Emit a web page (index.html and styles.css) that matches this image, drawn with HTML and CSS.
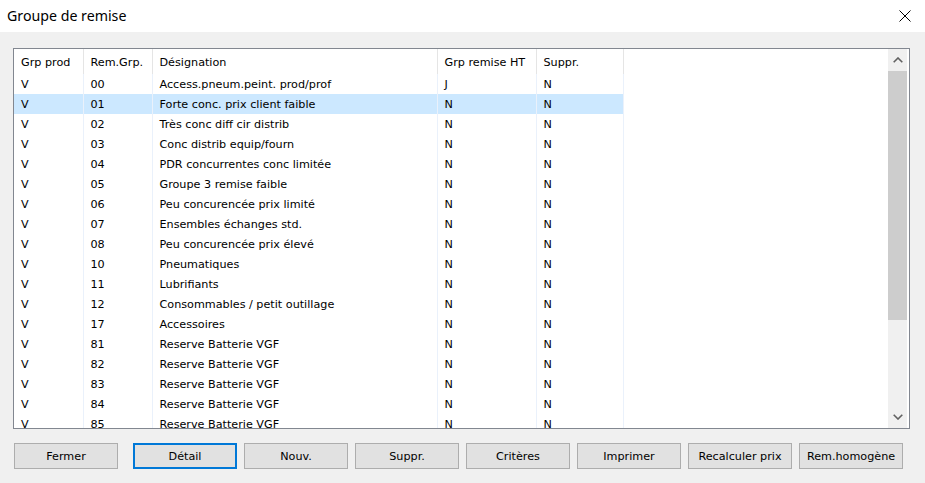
FILE: index.html
```html
<!DOCTYPE html>
<html lang="fr">
<head>
<meta charset="utf-8">
<title>Groupe de remise</title>
<link rel="stylesheet" href="styles.css">
</head>
<body>
<div class="window">
  <div class="titlebar">
    <span class="title">Groupe de remise</span>
    <svg class="close" width="12" height="12" viewBox="0 0 12 12"><path d="M0.5 0.5 L11.5 11.5 M11.5 0.5 L0.5 11.5" stroke="#000" stroke-width="1" fill="none"/></svg>
  </div>
  <div class="client">
    <div class="listbox">
      <div class="grid-area">
        <table class="grid">
          <colgroup>
            <col class="c1"><col class="c2"><col class="c3"><col class="c4"><col class="c5"><col>
          </colgroup>
          <thead>
            <tr><th>Grp prod</th><th>Rem.Grp.</th><th>Désignation</th><th>Grp remise HT</th><th>Suppr.</th><th class="fill"></th></tr>
          </thead>
          <tbody>
            <tr><td>V</td><td>00</td><td>Access.pneum.peint. prod/prof</td><td>J</td><td>N</td><td class="fill"></td></tr>
            <tr class="selected"><td>V</td><td>01</td><td>Forte conc. prix client faible</td><td>N</td><td>N</td><td class="fill"></td></tr>
            <tr><td>V</td><td>02</td><td>Très conc diff cir distrib</td><td>N</td><td>N</td><td class="fill"></td></tr>
            <tr><td>V</td><td>03</td><td>Conc distrib equip/fourn</td><td>N</td><td>N</td><td class="fill"></td></tr>
            <tr><td>V</td><td>04</td><td>PDR concurrentes conc limitée</td><td>N</td><td>N</td><td class="fill"></td></tr>
            <tr><td>V</td><td>05</td><td>Groupe 3 remise faible</td><td>N</td><td>N</td><td class="fill"></td></tr>
            <tr><td>V</td><td>06</td><td>Peu concurencée prix limité</td><td>N</td><td>N</td><td class="fill"></td></tr>
            <tr><td>V</td><td>07</td><td>Ensembles échanges std.</td><td>N</td><td>N</td><td class="fill"></td></tr>
            <tr><td>V</td><td>08</td><td>Peu concurencée prix élevé</td><td>N</td><td>N</td><td class="fill"></td></tr>
            <tr><td>V</td><td>10</td><td>Pneumatiques</td><td>N</td><td>N</td><td class="fill"></td></tr>
            <tr><td>V</td><td>11</td><td>Lubrifiants</td><td>N</td><td>N</td><td class="fill"></td></tr>
            <tr><td>V</td><td>12</td><td>Consommables / petit outillage</td><td>N</td><td>N</td><td class="fill"></td></tr>
            <tr><td>V</td><td>17</td><td>Accessoires</td><td>N</td><td>N</td><td class="fill"></td></tr>
            <tr><td>V</td><td>81</td><td>Reserve Batterie VGF</td><td>N</td><td>N</td><td class="fill"></td></tr>
            <tr><td>V</td><td>82</td><td>Reserve Batterie VGF</td><td>N</td><td>N</td><td class="fill"></td></tr>
            <tr><td>V</td><td>83</td><td>Reserve Batterie VGF</td><td>N</td><td>N</td><td class="fill"></td></tr>
            <tr><td>V</td><td>84</td><td>Reserve Batterie VGF</td><td>N</td><td>N</td><td class="fill"></td></tr>
            <tr><td>V</td><td>85</td><td>Reserve Batterie VGF</td><td>N</td><td>N</td><td class="fill"></td></tr>
          </tbody>
        </table>
      </div>
      <div class="vscroll">
        <div class="sb-btn">
          <svg width="10" height="6" viewBox="0 0 10 6"><path d="M0.7 5.3 L5 1 L9.3 5.3" stroke="#606060" stroke-width="1.6" fill="none"/></svg>
        </div>
        <div class="sb-track"><div class="sb-thumb"></div></div>
        <div class="sb-btn">
          <svg width="10" height="6" viewBox="0 0 10 6"><path d="M0.7 0.7 L5 5 L9.3 0.7" stroke="#606060" stroke-width="1.6" fill="none"/></svg>
        </div>
      </div>
    </div>
    <div class="buttons">
      <button class="btn">Fermer</button>
      <button class="btn default">Détail</button>
      <button class="btn">Nouv.</button>
      <button class="btn">Suppr.</button>
      <button class="btn">Critères</button>
      <button class="btn">Imprimer</button>
      <button class="btn">Recalculer prix</button>
      <button class="btn">Rem.homogène</button>
    </div>
  </div>
</div>
</body>
</html>
```

FILE: styles.css
```css
* { box-sizing: border-box; }

html, body {
  margin: 0;
  padding: 0;
  background: #f0f0f0;
}

.window {
  width: 925px;
  height: 483px;
  overflow: hidden;
  background: #f0f0f0;
  font-family: "DejaVu Sans", sans-serif;
  font-size: 11.2px;
  color: #000;
}

.titlebar {
  height: 32px;
  background: #fff;
  display: flex;
  align-items: center;
  justify-content: space-between;
  padding: 0 14px 2px 7px;
}

.title {
  font-family: "Noto Sans", "Open Sans", sans-serif;
  font-size: 14.2px;
  color: #000;
}

.close {
  display: block;
  margin-top: 1px;
}

.client {
  padding: 16px 0 0 13px;
}

.listbox {
  width: 897px;
  height: 381px;
  border: 1px solid #828790;
  background: #fff;
  display: flex;
  padding-right: 2px;
}

.grid-area {
  width: 874px;
  height: 379px;
  overflow: hidden;
}

.grid {
  border-collapse: collapse;
  table-layout: fixed;
  width: 874px;
}

.c1 { width: 69px; }
.c2 { width: 69px; }
.c3 { width: 285px; }
.c4 { width: 99px; }
.c5 { width: 87px; }

.grid th,
.grid td {
  padding: 0 0 0 7px;
  text-align: left;
  white-space: nowrap;
  overflow: hidden;
  border-right: 1px solid #e5e5e5;
  font-weight: normal;
}

.grid th {
  height: 25px;
  padding-top: 2px;
}

.grid td {
  height: 20px;
  border-right-color: #eaf1fb;
}

.grid .fill {
  border-right: none;
}

.grid tr.selected td {
  background: #cce8ff;
}

.grid tr.selected td.fill {
  background: #fff;
}

.vscroll {
  width: 19px;
  height: 379px;
  display: flex;
  flex-direction: column;
  background: #f0f0f0;
}

.sb-btn {
  height: 22px;
  display: flex;
  align-items: center;
  justify-content: center;
  flex: none;
}

.sb-btn svg { display: block; }

.sb-track {
  flex: 1;
}

.sb-thumb {
  height: 249px;
  background: #cdcdcd;
}

.buttons {
  display: flex;
  gap: 7px;
  margin-top: 14px;
  padding-left: 1px;
}

.btn {
  width: 104px;
  height: 26px;
  background: #e1e1e1;
  border: 1px solid #adadad;
  font-family: "DejaVu Sans", sans-serif;
  font-size: 11.2px;
  color: #000;
  padding: 0;
  margin: 0;
}

.btn.default {
  border: 2px solid #0078d7;
  margin-left: 8px;
}
```
